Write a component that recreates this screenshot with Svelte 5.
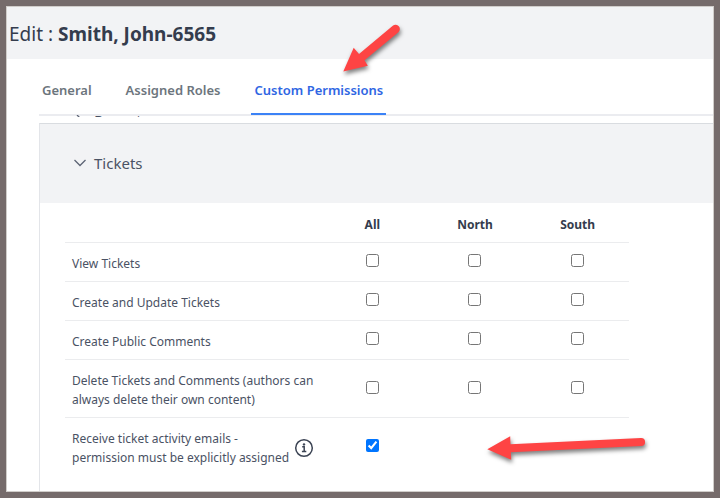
<script lang="ts">
  const tabs = ['General', 'Assigned Roles', 'Custom Permissions'];
  const scopes = ['All', 'North', 'South'];

  let activeTab = $state('Custom Permissions');
  let open = $state(true);

  let permissions = $state([
    { label: 'View Tickets', values: [false, false, false] },
    { label: 'Create and Update Tickets', values: [false, false, false] },
    { label: 'Create Public Comments', values: [false, false, false] },
    { label: 'Delete Tickets and Comments (authors can always delete their own content)', values: [false, false, false] },
    { label: 'Receive ticket activity emails - permission must be explicitly assigned', values: [true], info: true }
  ]);
</script>

<div class="frame">
  <main class="page">
    <header class="title-bar">
      <h1>Edit : <strong>Smith, John-6565</strong></h1>
    </header>

    <nav class="tabs">
      {#each tabs as tab}
        <button class="tab" class:active={tab === activeTab} onclick={() => (activeTab = tab)}>{tab}</button>
      {/each}
    </nav>

    <div class="content">
      <!-- previous section, scrolled under the tabs -->
      <div class="scrolled">
        <div class="scrolled-row">
          <svg width="12" height="12" viewBox="0 0 12 12"><path d="M3 1l5 5-5 5" /></svg>
          <span>Reports</span>
        </div>
      </div>

      <section class="panel">
        <button class="panel-header" aria-expanded={open} onclick={() => (open = !open)}>
          <svg width="12" height="12" viewBox="0 0 12 12"><path d="M0.5 3l5.5 5.5L11.5 3" /></svg>
          <span>Tickets</span>
        </button>

        {#if open}
          <div class="panel-body">
            <table>
              <thead>
                <tr>
                  <th class="name"></th>
                  {#each scopes as scope}
                    <th scope="col">{scope}</th>
                  {/each}
                </tr>
              </thead>
              <tbody>
                {#each permissions as permission}
                  <tr>
                    <td class="name">
                      <div class="label" class:with-info={permission.info}>
                        <span>{permission.label}</span>
                        {#if permission.info}
                          <svg class="info" width="20" height="20" viewBox="0 0 20 20">
                            <circle cx="10" cy="10" r="8.3" />
                            <path d="M8.2 8.8h2v4.7M7.9 13.6h4.4" />
                            <circle class="dot" cx="10" cy="6.4" r="1.2" />
                          </svg>
                        {/if}
                      </div>
                    </td>
                    {#each scopes as scope, i}
                      <td class="check">
                        {#if i < permission.values.length}
                          <input type="checkbox" aria-label="{permission.label}: {scope}" bind:checked={permission.values[i]} />
                        {/if}
                      </td>
                    {/each}
                  </tr>
                {/each}
              </tbody>
            </table>
          </div>
        {/if}
      </section>
    </div>
  </main>

  <svg class="arrow arrow-tab" width="70" height="60" viewBox="0 0 70 60">
    <path d="M3.3 51.6L13.7 27.7 19 34 52.8 5.8A4.2 4.2 0 0 1 58.4 12.2L24.5 40.2 27.8 45.8Z" />
  </svg>
  <svg class="arrow arrow-row" width="170" height="40" viewBox="0 0 170 40">
    <path d="M7.3 19.3L30.2 6.3 30.5 14.3 161 8A4 4 0 0 1 161.2 16L30.9 22.3 31.2 29.8Z" />
  </svg>
</div>

<style>
  :global(body) {
    margin: 0;
    background: #756b6b;
  }

  .frame {
    position: relative;
    box-sizing: border-box;
    height: 100vh;
    padding: 6px;
    font-family: 'Segoe UI', 'Noto Sans', sans-serif;
    font-size: 13px;
    color: #4a5264;
  }

  .page {
    box-sizing: border-box;
    height: 100%;
    overflow: hidden;
    border: 1px solid #d0cdca;
    background: #fff;
  }

  .title-bar {
    padding: 13px 2px 11px;
    background: #f2f3f5;
  }

  h1 {
    margin: 0;
    font-size: 19px;
    line-height: 28px;
    font-weight: 400;
    color: #343c4d;
  }

  h1 strong {
    font-weight: 700;
  }

  .tabs {
    display: flex;
    gap: 28px;
    margin-left: 32px;
    padding-top: 12px;
    border-bottom: 2px solid #ebecf0;
  }

  .tab {
    margin-bottom: -1px;
    padding: 7px 3px 11px;
    border: 0;
    border-bottom: 2px solid transparent;
    background: none;
    font: 600 13px/24px 'Segoe UI', 'Noto Sans', sans-serif;
    color: #6c757d;
    cursor: pointer;
  }

  .tab.active {
    border-color: #3b82f6;
    color: #2f66e3;
  }

  .content {
    margin-left: 32px;
  }

  .scrolled {
    height: 2px;
    margin-top: -1px;
    margin-bottom: 6px;
    overflow: hidden;
  }

  .scrolled-row {
    display: flex;
    align-items: center;
    gap: 8px;
    margin-top: -7px;
    padding-left: 35px;
    font-size: 15px;
    line-height: 24px;
  }

  .scrolled-row svg,
  .panel-header svg {
    fill: none;
    stroke: #5d6475;
    stroke-width: 1.3;
  }

  .panel {
    border-top: 1px solid #d9dce0;
    border-left: 1px solid #e3e5e9;
  }

  .panel-header {
    display: flex;
    align-items: center;
    gap: 8px;
    width: 100%;
    padding: 27px 34px 28px;
    border: 0;
    background: #f2f3f5;
    font: 400 15px/24px 'Segoe UI', 'Noto Sans', sans-serif;
    color: #4a5264;
    text-align: left;
    cursor: pointer;
  }

  .panel-body {
    padding: 0 84px 24px 25px;
  }

  table {
    width: 100%;
    table-layout: fixed;
    border-collapse: collapse;
  }

  th {
    height: 39px;
    padding: 4px 0 0;
    box-sizing: border-box;
    font-size: 12px;
    line-height: 19px;
    font-weight: 700;
    color: #343c4d;
  }

  th.name {
    width: 256px;
  }

  tbody td {
    padding: 11px 0 8px;
    border-top: 1px solid #ebecee;
    line-height: 19px;
  }

  td.name {
    padding-left: 7px;
  }

  td.check {
    padding: 0 0 4px;
    text-align: center;
  }

  .label {
    display: flex;
    align-items: center;
    max-width: 246px;
    font-size: 12px;
  }

  .label.with-info {
    gap: 2px;
    max-width: 242px;
  }

  .info {
    flex: none;
    fill: none;
    stroke: #3c4454;
    stroke-width: 1.5;
  }

  .info .dot {
    fill: #3c4454;
    stroke: none;
  }

  input {
    width: 13px;
    height: 13px;
    margin: 0;
    vertical-align: middle;
  }

  .arrow {
    position: absolute;
    overflow: visible;
    pointer-events: none;
    fill: #fe4444;
    filter: drop-shadow(1px 3px 2px rgba(0, 0, 0, 0.5));
  }

  .arrow-tab {
    top: 20px;
    left: 340px;
  }

  .arrow-row {
    top: 430px;
    left: 480px;
  }
</style>
